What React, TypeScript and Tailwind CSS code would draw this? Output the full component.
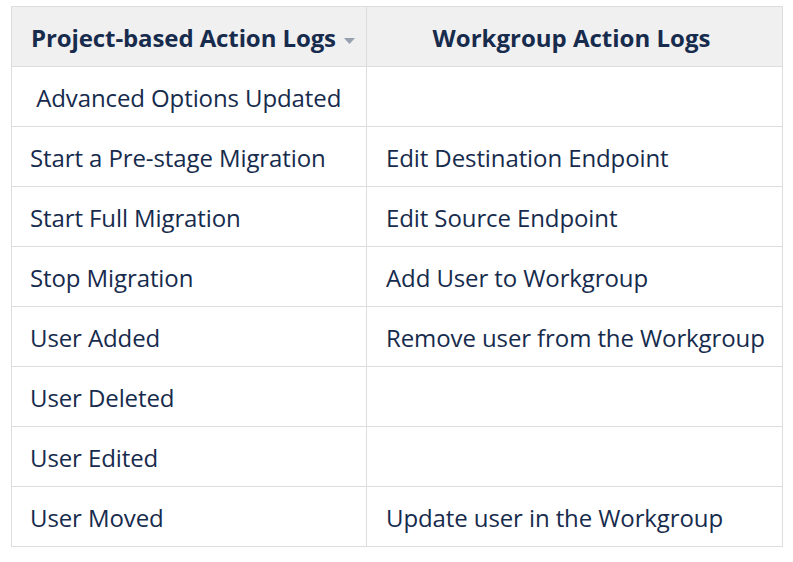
const rows: [string, string][] = [
  ["\u00a0Advanced Options Updated", ""],
  ["Start a Pre-stage Migration", "Edit Destination Endpoint"],
  ["Start Full Migration", "Edit Source Endpoint"],
  ["Stop Migration", "Add User to Workgroup"],
  ["User Added", "Remove user from the Workgroup"],
  ["User Deleted", ""],
  ["User Edited", ""],
  ["User Moved", "Update user in the Workgroup"],
];

// Two-column action log table.
export default function App() {
  return (
    <div className="h-[562px] w-[793px] bg-white pl-[11px] pt-[6px] font-['Open_Sans',sans-serif] text-[#172b4d]">
      <table className="w-[772px] table-fixed border-collapse">
        <colgroup>
          <col className="w-[355px]" />
          <col />
        </colgroup>
        <thead>
          <tr className="h-[60px] bg-[#f0f0f0]">
            <th className="border border-[#dddddd] pl-[19px] pr-1 pt-[2px] text-left text-[24px] font-bold tracking-[-0.1px] whitespace-nowrap">
              <span className="inline-flex items-center gap-[8px]">
                Project-based Action Logs
                <svg width="11" height="6" viewBox="0 0 11 6" className="mt-[6px]">
                  <path d="M0 0h11L5.5 6z" fill="#97a0af" />
                </svg>
              </span>
            </th>
            <th className="border border-[#dddddd] pt-[2px] pr-[6px] text-center text-[24px] font-bold tracking-[0px]">
              Workgroup Action Logs
            </th>
          </tr>
        </thead>
        <tbody>
          {rows.map(([a, b], i) => (
            <tr key={i} className="h-[60px]">
              <td className="border border-[#dddddd] pl-[18px] pt-[2px] text-[24px] tracking-[-0.1px]">{a}</td>
              <td className="border border-[#dddddd] pl-[19px] pt-[2px] text-[24px] tracking-[-0.1px]">{b}</td>
            </tr>
          ))}
        </tbody>
      </table>
    </div>
  );
}
